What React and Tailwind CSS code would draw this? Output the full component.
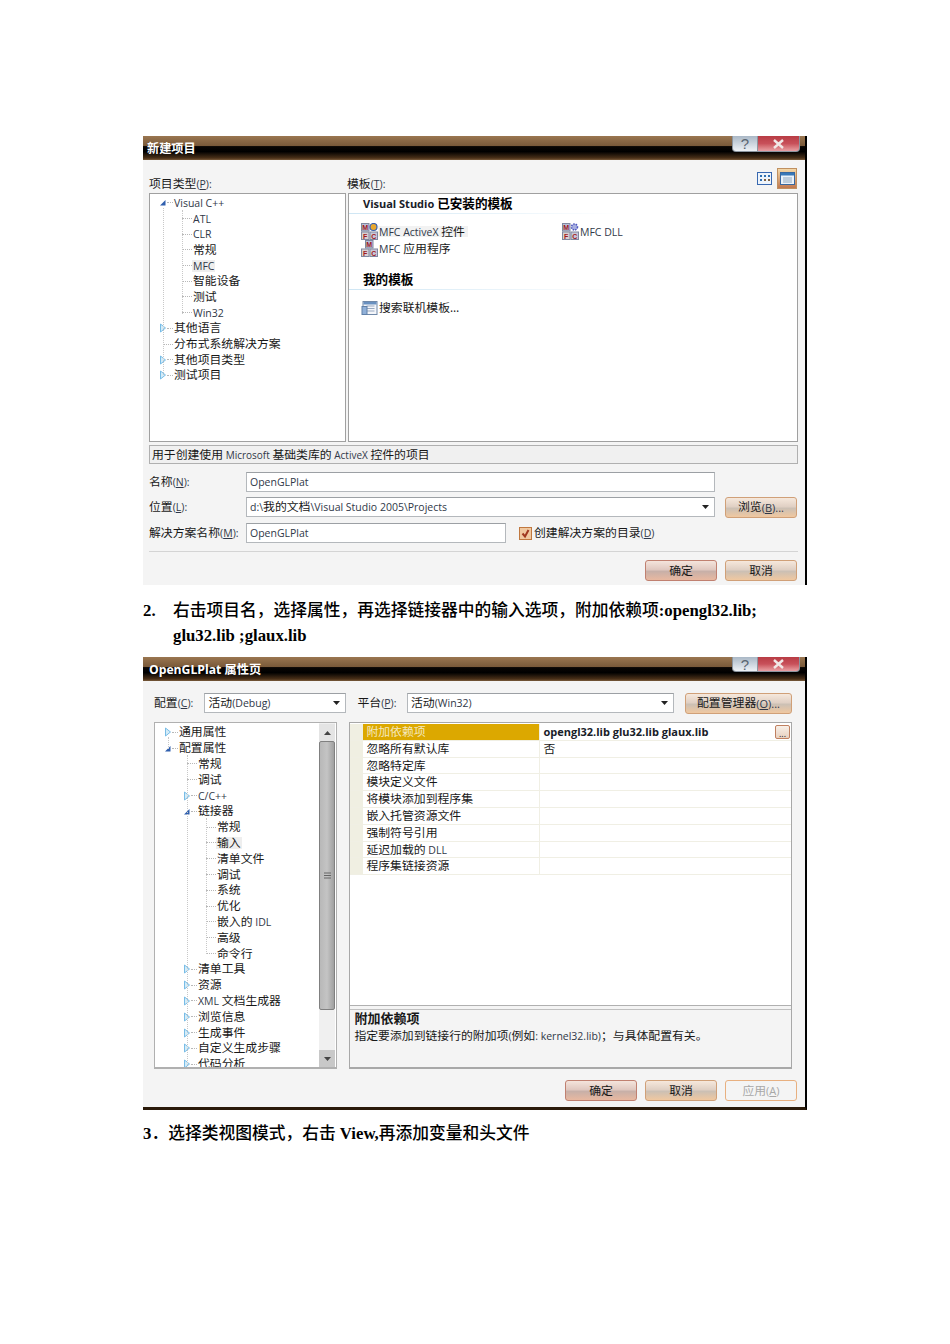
import React from 'react';

const SANS = "font-['Open_Sans','Noto_Sans_CJK_SC',sans-serif]";
const SERIF = "font-['Liberation_Serif','Noto_Sans_CJK_SC',serif]";

// Latin runs are a point smaller than the CJK ones, like Tahoma next to SimSun
const Mixed = ({ text, latin = 'text-[10.5px] text-[#303848]' }) =>
  text.split(/([\x20-\x7e]+)/).map((part, i) => {
    if (!/^[\x20-\x7e]+$/.test(part)) return <span key={i}>{part}</span>;
    // access keys such as (P) are underlined
    const key = part.match(/^(.*\()([A-Z])(\).*)$/);
    return (
      <span key={i} className={latin}>
        {key ? <>{key[1]}<span className="underline">{key[2]}</span>{key[3]}</> : part}
      </span>
    );
  });

const Arrow = ({ open }) =>
  open ? (
    <svg width="7" height="7" viewBox="0 0 7 7"><path d="M6.500 1v5.500H1z" fill="#2f5fae" /></svg>
  ) : (
    <svg width="6" height="10" viewBox="0 0 6 10"><path d="M.5 1l5 4-5 4z" fill="#d4ecf8" stroke="#78bce6" /></svg>
  );

const LEVEL = ['pl-[8px]', 'pl-[27px]', 'pl-[46px]'];

const TreeRow = ({ level = 0, label, arrow, active, h }) => (
  <div className={`${h} flex items-center shrink-0 whitespace-nowrap ${LEVEL[level]}`}>
    <span className={`flex justify-center ${arrow ? 'w-[9px]' : 'w-[5px]'}`}>{arrow && <Arrow open={arrow === 'open'} />}</span>
    <span className={`border-t border-dotted border-[#b8b8b8] ${arrow ? 'w-[6px]' : 'w-[10px]'}`} />
    <span className={`px-px ${active ? 'bg-[#eeeeee]' : ''}`}><Mixed text={label} /></span>
  </div>
);

const WinButtons = ({ h }) => (
  <div className={`absolute right-[5px] top-0 flex ${h}`}>
    <div className="w-[26px] rounded-bl-[4px] border border-t-0 border-[#8c96a0] bg-gradient-to-b from-[#aab8c6] to-[#eef2f6] flex items-center justify-center text-[15px] leading-none text-[#5a6570] font-['Liberation_Sans',sans-serif]">?</div>
    <div className="w-[42px] rounded-br-[4px] border border-t-0 border-l-0 border-[#8c96a0] bg-gradient-to-b from-[#b83c44] via-[#c8505a] to-[#e8a0a4] flex items-center justify-center">
      <svg width="13" height="10" viewBox="0 0 13 10"><path d="M2 1l9 8M11 1l-9 8" stroke="#f0e8e6" strokeWidth="2.400" /></svg>
    </div>
  </div>
);

const TitleBar = ({ title, pl, btnH }) => (
  <div className={`relative h-[24px] shrink-0 flex items-center pt-[2px] bg-[linear-gradient(#9a7650_0%,#7a5a3a_40%,#0a0604_44%,#000_65%,#4a3018_92%,#7a5c3c_100%)] ${pl}`}>
    <span className="text-[12.200px] font-bold text-white leading-none">{title}</span>
    <WinButtons h={btnH} />
  </div>
);

const Button = ({ children, w = 'w-[72px]', disabled, red }) => (
  <div
    className={`h-[21px] ${w} rounded-[3px] border flex items-center justify-center shrink-0 ${
      disabled
        ? 'border-[#e8b080] bg-[#f4f4f4] text-[#a8a8a8]'
        : red
          ? 'border-[#c08070] bg-[linear-gradient(#f4e4dc_0%,#e0c8c0_45%,#c8b0a8_55%,#e8b8a0_100%)]'
          : 'border-[#d0a078] bg-[linear-gradient(#f6e8dc_0%,#e0d0c4_45%,#ccc0b4_55%,#f0c8a0_100%)]'
    }`}
  >
    <Mixed text={children} latin={disabled ? 'text-[11px] text-[#a8a8a8]' : 'text-[11px] text-[#303848]'} />
  </div>
);

const Field = ({ w, children, chevron }) => (
  <div className={`${w} h-[20px] shrink-0 border border-[#b4b8bc] border-t-[#9ca0a4] bg-white flex items-center pl-[3px] pr-[5px] whitespace-nowrap`}>
    <span className="flex-1"><Mixed text={children} /></span>
    {chevron && <svg width="7" height="4" viewBox="0 0 7 4"><path d="M0 0h7L3.500 4z" fill="#222" /></svg>}
  </div>
);

const MfcIcon = ({ corner }) => {
  // the application icon has its M tile centred over F and C
  const mx = corner ? 0.5 : 4.5;
  return (
    <svg width="17" height="17" viewBox="0 0 17 17" className="shrink-0">
      <rect x={mx} y="0.500" width="7.500" height="7.500" fill="#b8c0d8" stroke="#8088a0" />
      <rect x="0.500" y="9" width="7.500" height="7.500" fill="#d8d0d0" stroke="#8088a0" />
      <rect x="9" y="9" width="7.500" height="7.500" fill="#c8c8d8" stroke="#8088a0" />
      <text x={mx + 3.700} y="7" textAnchor="middle" fontSize="7" fontWeight="700" fill="#a01820" fontFamily="Liberation Sans">M</text>
      <text x="4.200" y="15.500" textAnchor="middle" fontSize="7" fontWeight="700" fill="#a01820" fontFamily="Liberation Sans">F</text>
      <text x="12.700" y="15.500" textAnchor="middle" fontSize="7" fontWeight="700" fill="#a01820" fontFamily="Liberation Sans">C</text>
      {corner === 'ball' && <circle cx="12.500" cy="4" r="3.500" fill="#e8a830" stroke="#3860b0" strokeWidth="1.200" />}
      {corner === 'gear' && <circle cx="12.500" cy="4" r="3" fill="#a8b0e0" stroke="#5058c0" strokeWidth="1.500" strokeDasharray="1.500 1" />}
    </svg>
  );
};

const SearchIcon = () => (
  <svg width="17" height="16" viewBox="0 0 16 16" className="shrink-0">
    <rect x="1.500" y="1.500" width="14" height="13" fill="#f4f6fa" stroke="#7088a8" />
    <rect x="2" y="2" width="13" height="2.500" fill="#6890c0" />
    <path d="M5 6h8M5 8.500h8M5 11h8" stroke="#98a8c0" />
    <rect x="0.500" y="6.500" width="5" height="8" fill="#90b0d8" stroke="#6080a8" />
  </svg>
);

const SectionHead = ({ children }) => (
  <div>
    <div className="h-[19px] pt-[2px] pl-[14px] flex items-center font-bold text-[12.600px] text-black">
      <span><Mixed text={children} latin="text-[11px] text-[#182028]" /></span>
    </div>
    <div className="h-px w-[270px] bg-gradient-to-r from-[#cfe6f4] to-transparent" />
  </div>
);

const Template = ({ corner, icon, label, active }) => (
  <div className="h-[17px] flex items-center whitespace-nowrap">
    {icon || <MfcIcon corner={corner} />}
    <span className={`pl-px pr-[3px] ${active ? 'bg-[#f2f2f2]' : ''}`}><Mixed text={label} /></span>
  </div>
);

const NewProject = () => {
  const rows = [
    { label: 'Visual C++', arrow: 'open' },
    { label: 'ATL', level: 1 },
    { label: 'CLR', level: 1 },
    { label: '常规', level: 1 },
    { label: 'MFC', level: 1, active: true },
    { label: '智能设备', level: 1 },
    { label: '测试', level: 1 },
    { label: 'Win32', level: 1 },
    { label: '其他语言', arrow: 'closed' },
    { label: '分布式系统解决方案' },
    { label: '其他项目类型', arrow: 'closed' },
    { label: '测试项目', arrow: 'closed' },
  ];
  return (
    <div className="w-[664px] h-[449px] flex flex-col bg-[#f4f4f4] border-r-2 border-r-black">
      <TitleBar title="新建项目" pl="pl-[4px]" btnH="h-[16px]" />
      <div className="flex-1 pl-[6px] pr-[7px]">
        <div className="h-[33px] flex items-center pt-[14px] relative">
          <span className="w-[198px]"><Mixed text="项目类型(P):" /></span>
          <span><Mixed text="模板(T):" /></span>
          <div className="absolute right-[1px] top-[8px] flex items-center gap-[5px]">
            <svg width="15" height="13" viewBox="0 0 15 13"><rect x="0.500" y="0.500" width="14" height="12" fill="#eef4fb" stroke="#3868b0" /><path d="M3 4h2M7 4h2M11 4h2M3 8h2" stroke="#2f6fb0" strokeWidth="2" /><path d="M7 8h2M11 8h2" stroke="#806040" strokeWidth="2" /></svg>
            <div className="w-[20px] h-[21px] bg-[linear-gradient(#f4d8a8,#c07850)] border border-[#c09060] flex items-center justify-center">
              <svg width="15" height="13" viewBox="0 0 15 13"><rect x="0.500" y="0.500" width="14" height="12" fill="#eaf2fa" stroke="#3868a0" /><rect x="1" y="1" width="13" height="2.500" fill="#3878b8" /><path d="M3 6h9M3 8h9M3 10h9" stroke="#90a8c0" /></svg>
            </div>
          </div>
        </div>
        <div className="flex gap-[2px] h-[249px]">
          <div className="relative w-[197px] border border-[#a0a0a0] bg-white pt-px overflow-hidden">
            <div className="absolute left-[13px] top-[14px] h-[167px] border-l border-dotted border-[#c8c8c8]" />
            <div className="absolute left-[32px] top-[16px] h-[104px] border-l border-dotted border-[#c8c8c8]" />
            {rows.map((r) => <TreeRow key={r.label} h="h-[15.700px]" {...r} />)}
          </div>
          <div className="w-[450px] border border-[#a0a0a0] bg-white">
            <SectionHead>Visual Studio 已安装的模板</SectionHead>
            <div className="grid grid-cols-[201px_1fr] pl-[12px] pt-[9px]">
              <Template corner="ball" label="MFC ActiveX 控件" active />
              <Template corner="gear" label="MFC DLL" />
              <Template label="MFC 应用程序" />
            </div>
            <div className="mt-[13px]"><SectionHead>我的模板</SectionHead></div>
            <div className="pl-[12px] pt-[9px]"><Template icon={<SearchIcon />} label="搜索联机模板…" /></div>
          </div>
        </div>
        <div className="mt-[3px] h-[19px] w-[649px] border border-[#b0b0b0] bg-[#f0f0f0] flex items-center pl-[2px]"><span><Mixed text="用于创建使用 Microsoft 基础类库的 ActiveX 控件的项目" latin="text-[10px] text-[#303848]" /></span></div>
        <div className="mt-[8px] flex items-center h-[19px]">
          <span className="w-[97px]"><Mixed text="名称(N):" /></span>
          <Field w="w-[469px]">OpenGLPlat</Field>
        </div>
        <div className="mt-[6px] flex items-center h-[20px]">
          <span className="w-[97px]"><Mixed text="位置(L):" /></span>
          <Field w="w-[469px]" chevron>{'d:\\我的文档\\Visual Studio 2005\\Projects'}</Field>
          <div className="ml-[10px]"><Button>浏览(B)...</Button></div>
        </div>
        <div className="mt-[6px] flex items-center h-[20px]">
          <span className="w-[97px]"><Mixed text="解决方案名称(M):" /></span>
          <Field w="w-[260px]">OpenGLPlat</Field>
          <svg width="13" height="13" viewBox="0 0 13 13" className="ml-[13px] mr-[2px]"><rect x="0.500" y="0.500" width="12" height="12" fill="#f0c8a0" stroke="#c07840" /><path d="M3.500 6.500l2.500 3 3.500-6.500" fill="none" stroke="#a03820" strokeWidth="2" /></svg>
          <span><Mixed text="创建解决方案的目录(D)" /></span>
        </div>
        <div className="mt-[8px] h-px bg-[#d4d4d4]" />
        <div className="mt-[8px] flex justify-end gap-[8px] pr-[1px]">
          <Button red>确定</Button>
          <Button>取消</Button>
        </div>
      </div>
    </div>
  );
};

const Properties = () => {
  const rows = [
    { label: '通用属性', arrow: 'closed' },
    { label: '配置属性', arrow: 'open' },
    { label: '常规', level: 1 },
    { label: '调试', level: 1 },
    { label: 'C/C++', level: 1, arrow: 'closed' },
    { label: '链接器', level: 1, arrow: 'open' },
    { label: '常规', level: 2 },
    { label: '输入', level: 2, active: true },
    { label: '清单文件', level: 2 },
    { label: '调试', level: 2 },
    { label: '系统', level: 2 },
    { label: '优化', level: 2 },
    { label: '嵌入的 IDL', level: 2 },
    { label: '高级', level: 2 },
    { label: '命令行', level: 2 },
    { label: '清单工具', level: 1, arrow: 'closed' },
    { label: '资源', level: 1, arrow: 'closed' },
    { label: 'XML 文档生成器', level: 1, arrow: 'closed' },
    { label: '浏览信息', level: 1, arrow: 'closed' },
    { label: '生成事件', level: 1, arrow: 'closed' },
    { label: '自定义生成步骤', level: 1, arrow: 'closed' },
    { label: '代码分析', level: 1, arrow: 'closed' },
  ];
  const props = ['附加依赖项', '忽略所有默认库', '忽略特定库', '模块定义文件', '将模块添加到程序集', '嵌入托管资源文件', '强制符号引用', '延迟加载的 DLL', '程序集链接资源'];
  return (
    <div className="w-[664px] h-[453px] flex flex-col bg-[#f4f4f4] border-r-2 border-r-black border-b-[3px] border-b-[#2a1a0a]">
      <TitleBar title="OpenGLPlat 属性页" pl="pl-[6px]" btnH="h-[15px]" />
      <div className="flex-1 pl-[11px] pr-[13px]">
        <div className="h-[41px] flex items-center pt-[3px]">
          <span className="w-[52px]"><Mixed text="配置(C):" /></span>
          <Field w="w-[142px]" chevron>活动(Debug)</Field>
          <span className="w-[51px] ml-[11px]"><Mixed text="平台(P):" /></span>
          <Field w="w-[267px]" chevron>活动(Win32)</Field>
          <div className="ml-[11px]"><Button w="w-[107px]">配置管理器(O)...</Button></div>
        </div>
        <div className="flex gap-[12px] h-[347px]">
          <div className="relative w-[184px] border border-[#b0b0b0] border-b-2 bg-white flex overflow-hidden">
            <div className="absolute left-[13px] top-[14px] h-[12px] border-l border-dotted border-[#c8c8c8]" />
            <div className="absolute left-[32px] top-[32px] h-[310px] border-l border-dotted border-[#c8c8c8]" />
            <div className="absolute left-[51px] top-[95px] h-[136px] border-l border-dotted border-[#c8c8c8]" />
            <div className="flex-1 flex flex-col overflow-hidden pt-[1.500px]">{rows.map((r, i) => <TreeRow key={i} h="h-[15.800px]" {...r} />)}</div>
            <div className="w-[16px] mr-px flex flex-col bg-[#f0f0f0]">
              <div className="h-[17px] mt-px bg-[#e4e4e4] flex items-center justify-center">
                <svg width="7" height="4" viewBox="0 0 7 4"><path d="M0 4l3.500-4L7 4z" fill="#444" /></svg>
              </div>
              <div className="h-[269px] rounded-[2px] border border-[#808080] bg-gradient-to-r from-[#b8b8b8] via-[#c4c4c4] to-[#a0a0a0] flex items-center justify-center">
                <svg width="7" height="7" viewBox="0 0 7 7"><path d="M0 1h7M0 3.500h7M0 6h7" stroke="#666" /></svg>
              </div>
              <div className="flex-1" />
              <div className="h-[17px] bg-[#c8c8c8] flex items-center justify-center">
                <svg width="7" height="4" viewBox="0 0 7 4"><path d="M0 0l3.500 4L7 0z" fill="#444" /></svg>
              </div>
            </div>
          </div>
          <div className="w-[444px] border border-[#a8a8a8] border-b-2 bg-white flex flex-col">
            <div className="flex-1 pt-px">
              {props.map((name, i) => (
                <div key={name} className="h-[16.800px] flex border-b border-[#f0efe4]">
                  <div className="w-[13px] bg-[#f0efe2]" />
                  <div className={`w-[177px] pl-[3px] flex items-center border-r border-[#f0efe4] ${i === 0 ? 'bg-[#dca800] text-[#f4e8c0]' : ''}`}><span><Mixed text={name} /></span></div>
                  <div className="flex-1 pl-[3px] flex items-center justify-between pr-px">
                    {i === 0 && <span className="font-bold text-[11px] text-[#182028]">opengl32.lib glu32.lib glaux.lib</span>}
                    {i === 1 && <span>否</span>}
                    {i === 0 && <span className="w-[15px] h-[14px] rounded-[2px] border border-[#c08060] bg-gradient-to-b from-[#f8f0e8] to-[#e8d0c0] flex items-end justify-center text-[9px] leading-[9px]">...</span>}
                  </div>
                </div>
              ))}
            </div>
            <div className="h-[62px] bg-[#f4f4f4] border-t border-[#b0b0b0]">
              <div className="h-[3px]" />
              <div className="border-t border-[#c0c0c0] pl-[4px]">
                <div className="font-bold text-[13px] h-[17px] leading-[17px]">附加依赖项</div>
                <div className="h-[16px] leading-[16px] whitespace-nowrap"><Mixed text="指定要添加到链接行的附加项(例如: kernel32.lib)；与具体配置有关。" /></div>
              </div>
            </div>
          </div>
        </div>
        <div className="mt-[11px] flex justify-end gap-[8px] mr-[-5px]">
          <Button red>确定</Button>
          <Button>取消</Button>
          <Button disabled>应用(A)</Button>
        </div>
      </div>
    </div>
  );
};

export default function App() {
  return (
    <div className={`min-h-[1344px] bg-white pt-[136px] pl-[143px] text-[11.850px] leading-none text-[#181818] ${SANS}`}>
      <NewProject />
      <div className={`mt-[13px] w-[664px] text-[16.750px] leading-[25px] font-medium text-black ${SERIF}`}>
        <div className="flex">
          <b className="w-[30px]">2.</b>
          <span>右击项目名，选择属性，再选择链接器中的输入选项，附加依赖项<b>:opengl32.lib;</b><br /><b>glu32.lib ;glaux.lib</b></span>
        </div>
      </div>
      <div className="mt-[9px]"><Properties /></div>
      <div className={`mt-[11px] text-[16.750px] leading-[25px] font-medium text-black ${SERIF}`}><b>3</b>．选择类视图模式，右击 <b>View,</b>再添加变量和头文件</div>
    </div>
  );
}
